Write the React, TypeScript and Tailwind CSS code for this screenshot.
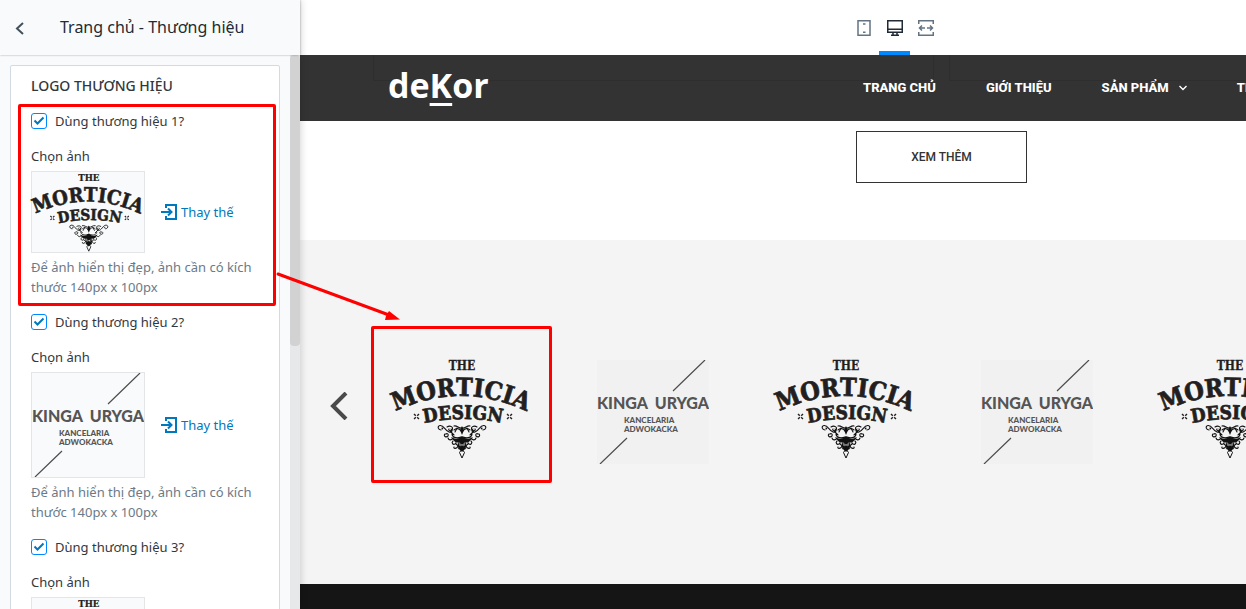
import { ReactNode, useState } from 'react';

const brands = [
  { id: 1, logo: 'morticia' },
  { id: 2, logo: 'kinga' },
  { id: 3, logo: 'morticia' },
];

const slides = ['morticia', 'kinga', 'morticia', 'kinga', 'morticia'];

const menu = [
  { label: 'TRANG CHỦ' },
  { label: 'GIỚI THIỆU' },
  { label: 'SẢN PHẨM', hasChildren: true },
  { label: 'TIN TỨC' },
];

// left half of the ornament, mirrored for the right half
function Ornament() {
  return (
    <g fill="none" stroke="#111" strokeWidth="1.1" strokeLinecap="round">
      <path d="M49 71c-3 0-4-4-1-4.500c4-.5 5 5 9 6.500c3 1 4-2 2-3" />
      <path d="M50 69c1 0 1 1 0 1M53 75c-2 2 1 4 3 2c1-2-1-3-2-2" />
      <path d="M55 68c3-2 7 0 5 3c-2 2-4 0-3-1M62 67c3-1 5 3 8 2M62 71c2-2 5-2 7 1" />
      <path d="M56 79c1 3 4 2 5 0M60 75c0 3 4 5 9 3M58 72l4 4M65 69l-2 4" />
      <path d="M61 82c-2 2 0 4 2 3c2-1 1-3 0-3M66 82l1 8M62 88c-1 2 3 2 4-1" />
      <path d="M64 85l5 4M68 80v9" />
    </g>
  );
}

function MorticiaLogo({ id, className }: { id: string; className?: string }) {
  return (
    <svg viewBox="0 0 138 100" className={`overflow-visible ${className}`} role="img" aria-label="The Morticia Design">
      <defs>
        <path id={`${id}-top`} d="M0 54 Q69 20 138 54" />
        <path id={`${id}-mid`} d="M28 65 Q71 55 114 65" />
      </defs>
      <g
        fill="#231f20"
        stroke="#231f20"
        strokeWidth="0.7"
        fontFamily='"DejaVu Serif Condensed", "DejaVu Serif", serif'
        fontWeight="700"
      >
        <text x="70" y="11" fontSize="12" strokeWidth="0.3" textAnchor="middle">THE</text>
        <text fontSize="25" textAnchor="middle">
          <textPath href={`#${id}-top`} startOffset="50%">MORTICIA</textPath>
        </text>
        <text fontSize="19" textAnchor="middle">
          <textPath href={`#${id}-mid`} startOffset="50%">DESIGN</textPath>
        </text>
      </g>
      <path
        d="M22 55l5 5M27 55l-5 5M115 55l5 5M120 55l-5 5"
        stroke="#231f20"
        strokeWidth="1.4"
        strokeDasharray="2.5 2"
      />
      <Ornament />
      <g transform="translate(140 0) scale(-1 1)">
        <Ornament />
      </g>
      <path d="M59 78q6 4 11-1q5 5 11 1q-3 6-8 5l-3 3-3-3q-5 1-8-5z" fill="#111" />
      <path d="M70 67l2 4-2 5-2-5zM70 86l4 3-4 4-4-4z" fill="#111" />
      <path d="M70 90l2.500 3.500-2.500 5.500-2.500-5.500z" fill="none" stroke="#111" />
    </svg>
  );
}

function KingaLogo({ className }: { className?: string }) {
  return (
    <svg viewBox="0 0 112 104" className={className} role="img" aria-label="Kinga Uryga">
      <path d="M76 31L108 0M3 104L30 78" stroke="#4d4d4d" strokeWidth="1.2" />
      <g fill="#555" fontFamily="Lato, sans-serif" fontWeight="900">
        <text x="0" y="49" fontSize="16">KINGA</text>
        <text x="112" y="49" fontSize="16" textAnchor="end">URYGA</text>
        <text x="27" y="63" fontSize="8">KANCELARIA</text>
        <text x="27" y="72" fontSize="8">ADWOKACKA</text>
      </g>
    </svg>
  );
}

function BrandField({ id, logo }: { id: number; logo: string }) {
  const [enabled, setEnabled] = useState(true);

  return (
    <div className="mt-[15px]">
      <label className="flex h-5 items-center gap-2 text-[#31373d]">
        <span className="grid">
          <input
            type="checkbox"
            checked={enabled}
            onChange={(e) => setEnabled(e.target.checked)}
            className="peer size-4 appearance-none rounded-[3px] border border-[#0088ff] bg-white [grid-area:1/1]"
          />
          <svg
            viewBox="0 0 16 16"
            className="pointer-events-none invisible size-4 peer-checked:visible [grid-area:1/1]"
          >
            <path d="M3.500 7.500l3 3 6-6" fill="none" stroke="#0078bd" strokeWidth="2" />
          </svg>
        </span>
        Dùng thương hiệu {id}?
      </label>

      <div className="mt-[15px] text-[#31373d]">Chọn ảnh</div>
      <div className="mt-[5px] flex items-center gap-4">
        <div className="w-[114px] border border-[#e3e5e7] bg-[#f9fafb]">
          {logo === 'morticia' ? (
            <MorticiaLogo id={`field-${id}`} className="h-20 w-full" />
          ) : (
            <KingaLogo className="h-[104px] w-full" />
          )}
        </div>
        <button type="button" className="flex items-center gap-1 text-[#0078bd]">
          <svg viewBox="0 0 16 16" className="size-4" fill="none" stroke="currentColor" strokeWidth="2">
            <path d="M5 4V1h10v14H5v-3" />
            <path d="M0 8h9M7 4.500L10.500 8 7 11.500" />
          </svg>
          Thay thế
        </button>
      </div>
      <p className="mt-1 text-[#6b7a88]">
        Để ảnh hiển thị đẹp, ảnh cần có kích thước 140px x 100px
      </p>
    </div>
  );
}

function Sidebar() {
  return (
    <aside className="z-10 flex w-[300px] shrink-0 flex-col bg-[#f9fafb] shadow-[0_0_8px_rgba(0,0,0,0.2)]">
      <header className="z-10 flex h-[55px] shrink-0 items-center bg-[#f9fafb] shadow-[0_0_2px_rgba(0,0,0,0.35)]">
        <button type="button" aria-label="Quay lại" className="flex w-[60px] pl-[15px]">
          <svg viewBox="0 0 10 14" className="h-[14px] w-[10px]" fill="none" stroke="#42505c" strokeWidth="2">
            <path d="M8 2L2 7.500 8 13" />
          </svg>
        </button>
        <h1 className="pb-[2px] text-[16px] text-[#212b35]">Trang chủ - Thương hiệu</h1>
      </header>
      <div className="flex min-h-0 flex-1">
        <div className="flex-1 overflow-hidden p-[10px]">
          <section className="rounded-[2px] border border-[#d3dbe2] bg-white px-5 py-[10px] text-[13px] leading-5">
            <h2 className="text-[14px] font-medium text-[#31373d]">LOGO THƯƠNG HIỆU</h2>
            {brands.map((brand) => (
              <BrandField key={brand.id} {...brand} />
            ))}
          </section>
        </div>
        <div className="w-[10px] bg-[#e6e8ea]">
          <div className="h-[291px] rounded-[4px] bg-[#d2d2d2]" />
        </div>
      </div>
    </aside>
  );
}

function DeviceTab({ label, active, children }: { label: string; active?: boolean; children: ReactNode }) {
  return (
    <button
      type="button"
      aria-label={label}
      className={`flex w-[31px] items-center justify-center border-b-4 pt-1 ${
        active ? 'border-[#0088ff] text-[#212b35]' : 'border-transparent text-[#637381]'
      }`}
    >
      <svg viewBox="0 0 16 16" className="size-4" fill="none" stroke="currentColor" strokeWidth="1.5">
        {children}
      </svg>
    </button>
  );
}

function Preview() {
  return (
    <main className="flex min-w-0 flex-1 flex-col overflow-hidden bg-white">
      <div className="flex h-[55px] shrink-0 pl-[548px]">
        <DeviceTab label="Điện thoại">
          <path d="M2 .75h12v14.500H2zM7 4h2.500M7 12.250h2.500" />
        </DeviceTab>
        <DeviceTab label="Máy tính" active>
          <path d="M.75.75h14.500v11.500H.75zM1 9.250h14M6 12v3M10 12v3M4 15.250h8" />
        </DeviceTab>
        <DeviceTab label="Toàn màn hình">
          <path d="M.75 4V.75h14.500V4M.75 12v3.250h14.500V12" />
          <path d="M7 8H1.500M4 5.500L1.500 8 4 10.500M9 8h5.500M12 5.500L14.500 8 12 10.500" />
        </DeviceTab>
      </div>

      <header className="relative flex h-[66px] shrink-0 items-center bg-[#333] pl-[88px]">
        {/* product cards showing through the sticky bar */}
        <div className="absolute top-0 left-[73px] h-[26px] w-[561px] border-x border-b border-[#2e2e2e]" />
        <div className="absolute top-0 left-[649px] h-[26px] w-[561px] border-x border-b border-[#2e2e2e]" />
        <a
          href="#"
          className="relative w-[475px] shrink-0 pb-[6px] font-['Open_Sans'] text-[34px] leading-10 font-bold text-white"
        >
          de<span className="underline decoration-3 underline-offset-[5px]">K</span>or
        </a>
        <nav className="relative flex gap-[50px] font-['Roboto'] text-[13px] font-extrabold whitespace-nowrap text-white">
          {menu.map((item) => (
            <a key={item.label} href="#" className="flex items-center gap-[10px]">
              {item.label}
              {item.hasChildren && (
                <svg viewBox="0 0 8 6" className="h-[6px] w-2" fill="none" stroke="currentColor" strokeWidth="1.400">
                  <path d="M.5 1L4 4.500 7.500 1" />
                </svg>
              )}
            </a>
          ))}
        </nav>
      </header>

      <div className="flex h-[119px] shrink-0 items-start pt-[10px] pl-[556px]">
        <button
          type="button"
          className="h-[52px] w-[171px] shrink-0 border border-[#333] font-['Roboto'] text-[12px] font-medium text-[#333]"
        >
          XEM THÊM
        </button>
      </div>

      <section className="flex h-[344px] shrink-0 items-start bg-[#f4f4f4] pt-[119px]">
        <button type="button" aria-label="Trước" className="flex h-[94px] w-[65px] shrink-0 items-center pl-[30px]">
          <svg viewBox="0 0 18 28" className="h-7 w-[18px]" fill="none" stroke="#4a4a4a" strokeWidth="4">
            <path d="M16 1L3 14l13 13" />
          </svg>
        </button>
        {slides.map((logo, i) => (
          <div key={i} className="flex w-48 shrink-0 justify-center">
            {logo === 'morticia' ? (
              <MorticiaLogo id={`slide-${i}`} className="h-[100px] w-[138px]" />
            ) : (
              <KingaLogo className="mt-px h-[104px] w-28 bg-[#f1f1f1]" />
            )}
          </div>
        ))}
      </section>
      <footer className="flex-1 bg-[#151515]" />
    </main>
  );
}

function Annotations() {
  return (
    <div className="pointer-events-none absolute inset-0 z-20">
      <div className="absolute top-[104px] left-[18px] h-[202px] w-[258px] rounded-[2px] border-3 border-[#ff0000]" />
      <div className="absolute top-[326px] left-[371px] h-[157px] w-[181px] rounded-[2px] border-3 border-[#ff0000]" />
      <svg viewBox="0 0 126 52" className="absolute top-[270px] left-[275px] h-[52px] w-[126px]">
        <path d="M3 4L114 45" stroke="#ff0000" strokeWidth="3" strokeLinecap="round" />
        <path d="M125 49.500L110 50l1-4 3-5z" fill="#ff0000" />
      </svg>
    </div>
  );
}

export default function App() {
  return (
    <div className="relative flex h-screen overflow-hidden font-['Noto_Sans',sans-serif]">
      <Sidebar />
      <Preview />
      <Annotations />
    </div>
  );
}
